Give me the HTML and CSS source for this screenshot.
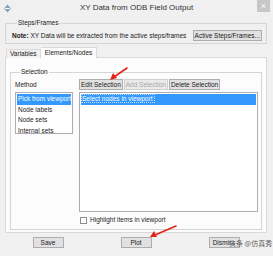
FILE: index.html
```html
<!DOCTYPE html>
<html lang="en">
<head>
  <meta charset="UTF-8">
  <meta name="viewport" content="width=device-width, initial-scale=1.0">
  <title>XY Data from ODB Field Output</title>
  <link rel="stylesheet" href="styles.css">
</head>
<body>
  <div class="window">
    <div class="titlebar">
      <svg class="app-icon" width="9" height="9" viewBox="0 0 9 9">
        <path d="M4.5 0.5 L8 4.5 L4.5 8.5 L1 4.5 Z" fill="#8aa0b8"/>
        <path d="M2 4.5 H7" stroke="#fff" stroke-width="1"/>
      </svg>
      <span class="title">XY Data from ODB Field Output</span>
      <span class="close">&#215;</span>
    </div>

    <fieldset class="group steps">
      <legend>Steps/Frames</legend>
      <div class="note-row">
        <span class="note"><b>Note:</b> XY Data will be extracted from the active steps/frames</span>
        <button class="btn">Active Steps/Frames...</button>
      </div>
    </fieldset>

    <div class="tabs">
      <div class="tab">Variables</div>
      <div class="tab active">Elements/Nodes</div>
    </div>

    <div class="panel">
      <fieldset class="group selection">
        <legend>Selection</legend>
        <div class="sel-grid">
          <div class="method">Method</div>
          <div class="actions">
            <button class="btn">Edit Selection</button>
            <button class="btn" disabled>Add Selection</button>
            <button class="btn">Delete Selection</button>
          </div>
          <ul class="list methods">
            <li class="selected">Pick from viewport</li>
            <li>Node labels</li>
            <li>Node sets</li>
            <li>Internal sets</li>
          </ul>
          <ul class="list items">
            <li class="selected"><span class="focus">Select nodes in viewport</span></li>
          </ul>
          <label class="check"><span class="box"></span>Highlight items in viewport</label>
        </div>
      </fieldset>
    </div>

    <div class="footer">
      <button class="btn">Save</button>
      <button class="btn">Plot</button>
      <button class="btn">Dismiss</button>
    </div>

    <!-- annotation arrows drawn over the dialog -->
    <svg class="arrows" width="273" height="256" viewBox="0 0 273 256">
      <path d="M127 68 L114 77" stroke="#e2231a" stroke-width="1.6" stroke-linecap="round"/>
      <path d="M110 80 L113 73 L117 78 Z" fill="#e2231a"/>
      <path d="M176 226 L155 235" stroke="#e2231a" stroke-width="1.6" stroke-linecap="round"/>
      <path d="M150 237 L154 231 L157 237 Z" fill="#e2231a"/>
    </svg>
    <div class="watermark">头条 @仿真秀</div>
  </div>
</body>
</html>
```

FILE: styles.css
```css
* { box-sizing: border-box; }
body {
  margin: 0;
  font-family: 'Liberation Sans', Arial, sans-serif;
  font-size: 6.5px;
  line-height: 8px;
  color: #1a1a1a;
  background: #f0f0f0;
}
.window {
  position: relative;
  width: 273px;
  height: 256px;
  background: #f0f0f0;
  overflow: hidden;
}
.titlebar {
  height: 19px;
  display: flex;
  align-items: center;
  padding: 0 0 3px 3px;
  position: relative;
}
.app-icon { flex: none; }
.title {
  flex: 1;
  text-align: center;
  font-size: 8px;
  color: #333;
  padding-left: 4px;
}
.close {
  width: 13px;
  height: 12px;
  margin: 0 3px 0 0;
  align-self: flex-start;
  background: #c7c7c7;
  color: #fff;
  font-size: 9px;
  line-height: 12px;
  text-align: center;
}
.group {
  margin: 0;
  border: 1px solid #d5d5d5;
  padding: 0;
  min-width: 0;
}
.group legend {
  padding: 0 1px;
  margin-left: 5px;
  line-height: 8px;
}
.steps {
  margin: 0 6px 0 5px;
  padding: 3px 4px 2px 6px;
}
.note-row {
  display: flex;
  align-items: center;
  justify-content: space-between;
}
.note b { font-weight: bold; }
.btn {
  font-family: inherit;
  font-size: 6.5px;
  line-height: 9px;
  height: 11px;
  padding: 0 1px;
  background: #e1e1e1;
  border: 1px solid #adadad;
  color: #1a1a1a;
  border-radius: 0;
  white-space: nowrap;
}
.btn:disabled {
  color: #a8a8a8;
  border-color: #d0d0d0;
  background: #eaeaea;
}
.tabs {
  display: flex;
  align-items: flex-end;
  margin: 3px 0 0 6px;
  height: 11px;
  position: relative;
  z-index: 1;
}
.tab {
  height: 9px;
  padding: 0 3px;
  border: 1px solid #d9d9d9;
  border-bottom: none;
  background: #f0f0f0;
  line-height: 8px;
}
.tab.active {
  height: 11px;
  background: #fcfcfc;
  padding: 1px 4px 0;
  border-left: none;
}
.panel {
  margin: -1px 6px 0 5px;
  border: 1px solid #d9d9d9;
  background: #fcfcfc;
  padding: 10px 4px 2px 4px;
  height: 176px;
}
.selection {
  padding: 3px 3px 4px 4px;
  height: 162px;
}
.sel-grid {
  display: grid;
  grid-template-columns: 58px 179px;
  grid-template-rows: 11px 120px auto;
  column-gap: 6px;
  row-gap: 2px;
}
.method {
  align-self: center;
}
.actions {
  display: flex;
  gap: 1px;
}
.list {
  list-style: none;
  margin: 0;
  padding: 1px;
  background: #fff;
  border: 1px solid #abadb3;
  overflow: hidden;
}
.list li {
  height: 10.5px;
  line-height: 10px;
  padding-left: 1px;
  white-space: nowrap;
  overflow: hidden;
}
.list li.selected {
  background: #3399ff;
  color: #fff;
}
.methods { height: 42px; }
.items { height: 120px; }
.focus {
  outline: 1px dotted #c9d6ec;
  padding-right: 2px;
}
.check {
  grid-column: 2;
  display: flex;
  align-items: center;
  gap: 3px;
  padding: 2px 0 0 1px;
}
.box {
  width: 7px;
  height: 7px;
  border: 1px solid #8f8f8f;
  background: #fff;
}
.footer {
  display: grid;
  grid-template-columns: repeat(3, 88px);
  justify-items: center;
  padding-left: 4px;
  margin-top: 4px;
}
.footer .btn { width: 31px; }
.arrows {
  position: absolute;
  left: 0;
  top: 0;
  pointer-events: none;
}
.watermark {
  position: absolute;
  left: 229px;
  top: 239px;
  font-family: 'Noto Sans CJK SC', sans-serif;
  font-size: 7px;
  color: #555;
  text-shadow: 0 0 1px #fff;
}
```
